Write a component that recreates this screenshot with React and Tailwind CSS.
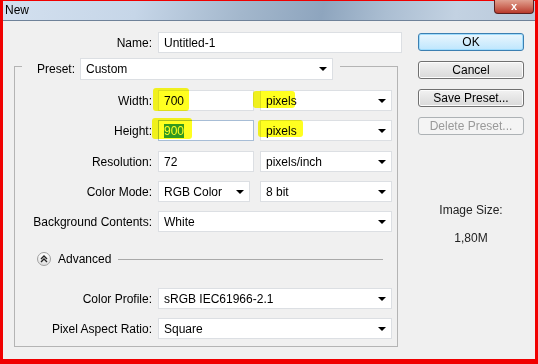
import React from "react";

function Arrow() {
  return (
    <svg width="8" height="4" viewBox="0 0 8 4" className="shrink-0">
      <path d="M0 0h8L4 4z" fill="#000" />
    </svg>
  );
}

function Select({ value, className }) {
  return (
    <div className={`h-[21px] bg-white border border-[#dcdfe3] flex items-center justify-between pl-[5px] pr-[5px] ${className}`}>
      <span>{value}</span>
      <Arrow />
    </div>
  );
}

function Field({ value, className, children }) {
  return (
    <div className={`h-[21px] bg-white border flex items-center pl-[5px] ${className}`}>
      {children || value}
    </div>
  );
}

function Row({ label, className, children }) {
  return (
    <div className={`flex items-center h-[21px] ${className}`}>
      <div className="w-[137px] text-right">{label}</div>
      <div className="ml-[6px] flex gap-[6px]">{children}</div>
    </div>
  );
}

function Button({ children, kind }) {
  const styles = {
    ok: "border-[#3c7fb1] bg-gradient-to-b from-[#eaf6fd] to-[#bee6fd] shadow-[inset_0_0_0_1px_#9fdcfd]",
    normal: "border-[#707070] bg-gradient-to-b from-[#f2f2f2] to-[#d9d9d9] shadow-[inset_0_0_0_1px_#fcfcfc]",
    disabled: "border-[#adb2b5] bg-[#f4f4f4] text-[#9a9a9a]",
  };
  return (
    <div className={`h-[18px] rounded-[3px] border flex items-center justify-center ${styles[kind]}`}>
      {children}
    </div>
  );
}

export default function App() {
  return (
    <div
      className="w-[538px] h-[364px] bg-[#f00000] pl-[3px] pr-[3px] pt-[1px] pb-[5px] flex flex-col text-[12px] text-black"
      style={{ fontFamily: '"Liberation Sans", Arial, sans-serif' }}
    >
      {/* title bar */}
      <div className="h-[20px] flex justify-between items-start bg-[linear-gradient(100deg,#d3e0ef_0%,#c6d6e8_25%,#a3b7cc_45%,#8ea5be_60%,#abbed2_72%,#c3d2e2_85%,#b9c9db_100%)] border-b border-[#6f8299]">
        <span className="pl-[2px] pt-[2px] leading-[14px] text-[12px]">New</span>
        <div className="-mt-[1px] mr-[1px] w-[40px] h-[14px] rounded-b-[4px] border border-[#5b1f1f] border-t-0 bg-gradient-to-b from-[#e0a090] to-[#b8392c] flex items-center justify-center text-white text-[11px] font-bold leading-none">
          x
        </div>
      </div>

      {/* body */}
      <div className="relative flex-1 bg-[#f0f0f0] flex">
        {/* left column */}
        <div className="w-[399px] flex flex-col">
          <div className="flex items-center h-[21px] mt-[11px]">
            <div className="w-[149px] text-right">Name:</div>
            <Field value="Untitled-1" className="ml-[6px] w-[244px] border-[#dcdfe3]" />
          </div>

          {/* group box */}
          <div className="ml-[11px] mt-[13px] w-[384px] h-[281px] border border-[#b4b4b4] flex flex-col">
            <div className="-mt-[9px] ml-[7px] w-[318px] h-[22px] bg-[#f0f0f0] flex items-center">
              <div className="pl-[15px] w-[58px]">Preset:</div>
              <Select value="Custom" className="w-[253px] h-[22px]" />
            </div>

            <Row label="Width:" className="mt-[10px]">
              <Field value="700" className="w-[96px] border-[#dcdfe3]" />
              <Select value="pixels" className="w-[132px]" />
            </Row>
            <Row label="Height:" className="mt-[9px]">
              <Field className="w-[96px] border-[#a7bdd6]">
                <span className="bg-[#3399ff] text-white leading-[14px]">900</span>
              </Field>
              <Select value="pixels" className="w-[132px]" />
            </Row>
            <Row label="Resolution:" className="mt-[10px]">
              <Field value="72" className="w-[96px] border-[#dcdfe3]" />
              <Select value="pixels/inch" className="w-[132px]" />
            </Row>
            <Row label="Color Mode:" className="mt-[9px]">
              <Select value="RGB Color" className="w-[92px] mr-[4px]" />
              <Select value="8 bit" className="w-[132px]" />
            </Row>
            <Row label="Background Contents:" className="mt-[9px]">
              <Select value="White" className="w-[234px]" />
            </Row>

            <div className="mt-[20px] h-[14px] flex items-center">
              <div className="ml-[22px] w-[14px] h-[14px] rounded-full border border-[#a0a0a0] bg-gradient-to-b from-white to-[#dedede] flex items-center justify-center">
                <svg width="8" height="8" viewBox="0 0 8 8">
                  <path d="M1 4l3-3 3 3M1 7l3-3 3 3" fill="none" stroke="#222" strokeWidth="1.3" />
                </svg>
              </div>
              <span className="ml-[7px]">Advanced</span>
              <div className="ml-[7px] w-[265px] h-px bg-[#a9a9a9]" />
            </div>

            <Row label="Color Profile:" className="mt-[22px]">
              <Select value="sRGB IEC61966-2.1" className="w-[234px]" />
            </Row>
            <Row label="Pixel Aspect Ratio:" className="mt-[9px]">
              <Select value="Square" className="w-[234px]" />
            </Row>
          </div>
        </div>

        {/* right column */}
        <div className="ml-[16px] w-[106px] flex flex-col">
          <div className="mt-[12px] flex flex-col gap-[10px]">
            <Button kind="ok">OK</Button>
            <Button kind="normal">Cancel</Button>
            <Button kind="normal">Save Preset...</Button>
            <Button kind="disabled">Delete Preset...</Button>
          </div>
          <div className="mt-[68px] text-center leading-[14px] text-[#222]">Image Size:</div>
          <div className="mt-[14px] text-center leading-[14px] text-[#222]">1,80M</div>
        </div>

        {/* highlighter marks */}
        <div className="absolute left-[150px] top-[67px] w-[36px] h-[23px] rounded-[3px] bg-[#ffff20] mix-blend-multiply" />
        <div className="absolute left-[149px] top-[97px] w-[40px] h-[21px] rounded-[3px] bg-[#ffff20] mix-blend-multiply" />
        <div className="absolute left-[250px] top-[70px] w-[42px] h-[17px] rounded-[3px] bg-[#ffff20] mix-blend-multiply" />
        <div className="absolute left-[255px] top-[99px] w-[45px] h-[17px] rounded-[3px] bg-[#ffff20] mix-blend-multiply" />
      </div>
    </div>
  );
}
